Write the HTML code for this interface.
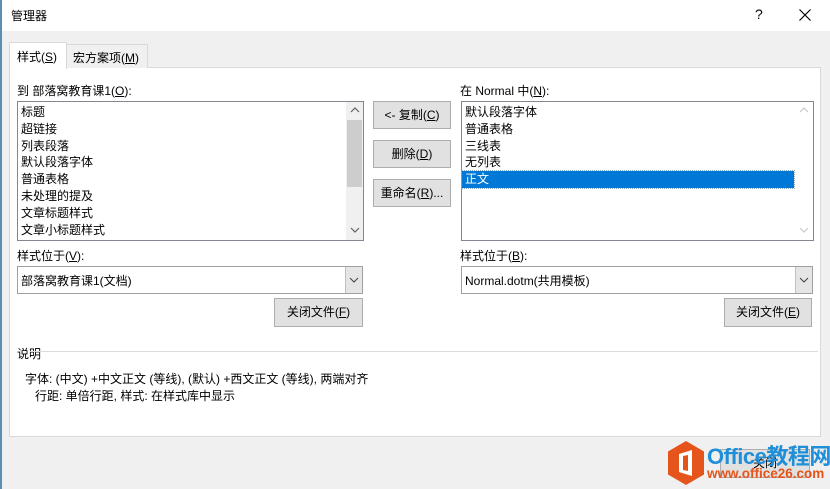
<!DOCTYPE html>
<html><head><meta charset="utf-8"><style>
*{margin:0;padding:0;box-sizing:border-box}
body{width:830px;height:489px;background:#f0f0f0;font-family:"Liberation Sans","Microsoft YaHei","Noto Sans CJK SC",sans-serif;font-size:12px;color:#000;position:relative;overflow:hidden}
.a{position:absolute;white-space:nowrap}
.btn{position:absolute;background:#e1e1e1;border:1px solid #adadad;text-align:center;font-size:12px}
.lb{position:absolute;background:#fff;border:1px solid #828790;padding-top:2px}
.lb div{height:16.8px;line-height:16px;padding-left:3px;font-size:12px}
u{text-decoration:underline}
</style></head><body>
<div class="a" style="left:0;top:0;width:830px;height:31px;background:#fff"></div>
<div class="a" style="left:0;top:0;width:2px;height:489px;background:#5a8fb5"></div>
<div class="a" style="left:11px;top:7px;font-size:12px">管理器</div>
<div class="a" style="left:755px;top:6px;font-size:14px">?</div>
<svg class="a" style="left:799px;top:9px" width="12" height="12"><path d="M0.5 0.5L11.5 11.5M11.5 0.5L0.5 11.5" stroke="#000" stroke-width="1.2"/></svg>

<div class="a" style="left:9px;top:67px;width:812px;height:370px;background:#fff;border:1px solid #d9d9d9"></div>
<div class="a" style="left:66px;top:44px;width:82px;height:24px;background:#f0f0f0;border:1px solid #d9d9d9;border-bottom:none"></div>
<div class="a" style="left:73px;top:49px">宏方案项(<u>M</u>)</div>
<div class="a" style="left:9px;top:42px;width:58px;height:27px;background:#fff;border:1px solid #d9d9d9;border-bottom:none"></div>
<div class="a" style="left:17px;top:48px">样式(<u>S</u>)</div>

<div class="a" style="left:17px;top:82px">到 部落窝教育课1(<u>O</u>):</div>
<div class="lb" style="left:17px;top:101px;width:347px;height:140px">
<div>标题</div><div>超链接</div><div>列表段落</div><div>默认段落字体</div><div>普通表格</div><div>未处理的提及</div><div>文章标题样式</div><div>文章小标题样式</div>
</div>
<div class="a" style="left:346px;top:102px;width:17px;height:138px;background:#f0f0f0"></div>
<div class="a" style="left:347px;top:120px;width:15px;height:67px;background:#cdcdcd"></div>
<svg class="a" style="left:350px;top:107px" width="10" height="7"><path d="M1 5L5 1L9 5" stroke="#606060" fill="none" stroke-width="1.2"/></svg>
<svg class="a" style="left:350px;top:227px" width="10" height="7"><path d="M1 1L5 5L9 1" stroke="#606060" fill="none" stroke-width="1.2"/></svg>

<div class="btn" style="left:373px;top:101px;width:78px;height:28px;line-height:26px">&lt;- 复制(<u>C</u>)</div>
<div class="btn" style="left:373px;top:140px;width:78px;height:28px;line-height:26px">删除(<u>D</u>)</div>
<div class="btn" style="left:373px;top:179px;width:78px;height:28px;line-height:26px">重命名(<u>R</u>)...</div>

<div class="a" style="left:460px;top:82px">在 Normal 中(<u>N</u>):</div>
<div class="lb" style="left:461px;top:101px;width:353px;height:140px">
<div>默认段落字体</div><div>普通表格</div><div>三线表</div><div>无列表</div><div style="background:#0078d7;color:#fff;width:332px;outline:1px dotted #8ab">正文</div>
</div>
<svg class="a" style="left:799px;top:107px" width="10" height="7"><path d="M1 5L5 1L9 5" stroke="#c8c8c8" fill="none" stroke-width="1.2"/></svg>
<svg class="a" style="left:799px;top:227px" width="10" height="7"><path d="M1 1L5 5L9 1" stroke="#c8c8c8" fill="none" stroke-width="1.2"/></svg>

<div class="a" style="left:17px;top:247px">样式位于(<u>V</u>):</div>
<div class="a" style="left:17px;top:266px;width:346px;height:28px;background:#fff;border:1px solid #a0a0a0"></div>
<div class="a" style="left:345px;top:267px;width:17px;height:26px;background:#e5e5e5;border-left:1px solid #c0c0c0"></div>
<svg class="a" style="left:349px;top:277px" width="10" height="6"><path d="M1 1L5 5L9 1" stroke="#404040" fill="none"/></svg>
<div class="a" style="left:21px;top:272px">部落窝教育课1(文档)</div>
<div class="btn" style="left:274px;top:298px;width:89px;height:29px;line-height:27px">关闭文件(<u>F</u>)</div>

<div class="a" style="left:460px;top:247px">样式位于(<u>B</u>):</div>
<div class="a" style="left:461px;top:266px;width:352px;height:28px;background:#fff;border:1px solid #a0a0a0"></div>
<div class="a" style="left:795px;top:267px;width:17px;height:26px;background:#e5e5e5;border-left:1px solid #c0c0c0"></div>
<svg class="a" style="left:799px;top:277px" width="10" height="6"><path d="M1 1L5 5L9 1" stroke="#404040" fill="none"/></svg>
<div class="a" style="left:465px;top:272px">Normal.dotm(共用模板)</div>
<div class="btn" style="left:724px;top:298px;width:88px;height:29px;line-height:27px">关闭文件(<u>E</u>)</div>

<div class="a" style="left:17px;top:345px">说明</div>
<div class="a" style="left:30px;top:351px;width:788px;height:1px;background:#dcdcdc"></div>
<div class="a" style="left:25px;top:370px">字体: (中文) +中文正文 (等线), (默认) +西文正文 (等线), 两端对齐</div>
<div class="a" style="left:35px;top:387px">行距: 单倍行距, 样式: 在样式库中显示</div>

<div class="btn" style="left:720px;top:449px;width:90px;height:29px;line-height:27px">关闭</div>
<svg class="a" style="left:666px;top:440px" width="40" height="46"><path d="M20 1L38 11.5V34.5L20 45L2 34.5V11.5Z" fill="#e5541b"/><path d="M13 14L26 10V36L13 32Z M17 16V30L22 31V15Z" fill="#fff" fill-rule="evenodd"/></svg>
<div class="a" style="left:707px;top:439px;font-size:22px;font-weight:bold;color:#1e8fd8;letter-spacing:-0.5px">Office教程网</div>
<div class="a" style="left:707px;top:466px;font-size:13.5px;font-weight:bold;color:#e5541b">www.office26.com</div>
</body></html>
